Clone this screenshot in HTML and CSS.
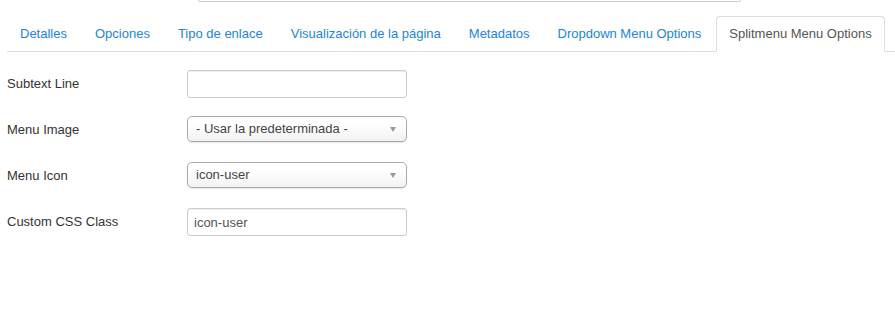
FILE: index.html
```html
<!DOCTYPE html>
<html lang="es">
<head>
<meta charset="UTF-8">
<meta name="viewport" content="width=device-width, initial-scale=1.0">
<title>Splitmenu Menu Options</title>
<link rel="stylesheet" href="styles.css">
</head>
<body>

<div class="caja-superior"></div>

<div class="contenido">
    <ul class="pestanas">
        <li><a href="#">Detalles</a></li>
        <li><a href="#">Opciones</a></li>
        <li><a href="#">Tipo de enlace</a></li>
        <li><a href="#">Visualización de la página</a></li>
        <li><a href="#">Metadatos</a></li>
        <li><a href="#">Dropdown Menu Options</a></li>
        <li class="activa"><a href="#">Splitmenu Menu Options</a></li>
    </ul>

    <form class="formulario">
        <div class="grupo">
            <label for="subtext">Subtext Line</label>
            <input type="text" id="subtext" class="campo">
        </div>
        <div class="grupo">
            <label>Menu Image</label>
            <div class="selector">
                <span>- Usar la predeterminada -</span>
                <b class="flecha"></b>
            </div>
        </div>
        <div class="grupo">
            <label>Menu Icon</label>
            <div class="selector">
                <span>icon-user</span>
                <b class="flecha"></b>
            </div>
        </div>
        <div class="grupo">
            <label for="css_class">Custom CSS Class</label>
            <input type="text" id="css_class" class="campo" value="icon-user">
        </div>
    </form>
</div>

</body>
</html>
```

FILE: styles.css
```css
body {
    margin: 0;
    font-family: "Liberation Sans", Arial, sans-serif;
    font-size: 13px;
    line-height: 18px;
    color: #333;
    background: #fff;
}
.caja-superior {
    margin-left: 198px;
    width: 541px;
    height: 1px;
    border: 1px solid #ccc;
    border-top: none;
    border-radius: 0 0 3px 3px;
}
.contenido {
    padding-left: 7px;
}
.pestanas {
    display: flex;
    list-style: none;
    margin: 14px 0 18px;
    padding: 0;
    border-bottom: 1px solid #ddd;
}
.pestanas li {
    margin-bottom: -1px;
    margin-right: 2px;
}
.pestanas a {
    display: block;
    padding: 8px 12px;
    line-height: 18px;
    border: 1px solid transparent;
    border-radius: 4px 4px 0 0;
    color: #2384d3;
    text-decoration: none;
}
.pestanas .activa a {
    color: #555;
    background: #fff;
    border-color: #ddd #ddd transparent;
}
.grupo {
    display: flex;
    align-items: flex-start;
    min-height: 28px;
    margin-bottom: 18px;
}
.grupo label {
    width: 180px;
    padding-top: 5px;
}
.campo {
    box-sizing: border-box;
    width: 220px;
    height: 28px;
    padding: 4px 6px;
    border: 1px solid #ccc;
    border-radius: 3px;
    font-family: inherit;
    font-size: 13px;
    color: #555;
    box-shadow: inset 0 1px 1px rgba(0, 0, 0, 0.075);
}
.selector {
    box-sizing: border-box;
    display: flex;
    align-items: center;
    justify-content: space-between;
    width: 220px;
    height: 26px;
    padding: 0 10px 0 8px;
    border: 1px solid #aaa;
    border-radius: 5px;
    background: linear-gradient(#fff 30%, #f2f2f2 100%);
    box-shadow: 0 1px 1px rgba(0, 0, 0, 0.1);
    color: #444;
}
.flecha {
    width: 0;
    height: 0;
    border-left: 3px solid transparent;
    border-right: 3px solid transparent;
    border-top: 5px solid #999;
}
```
